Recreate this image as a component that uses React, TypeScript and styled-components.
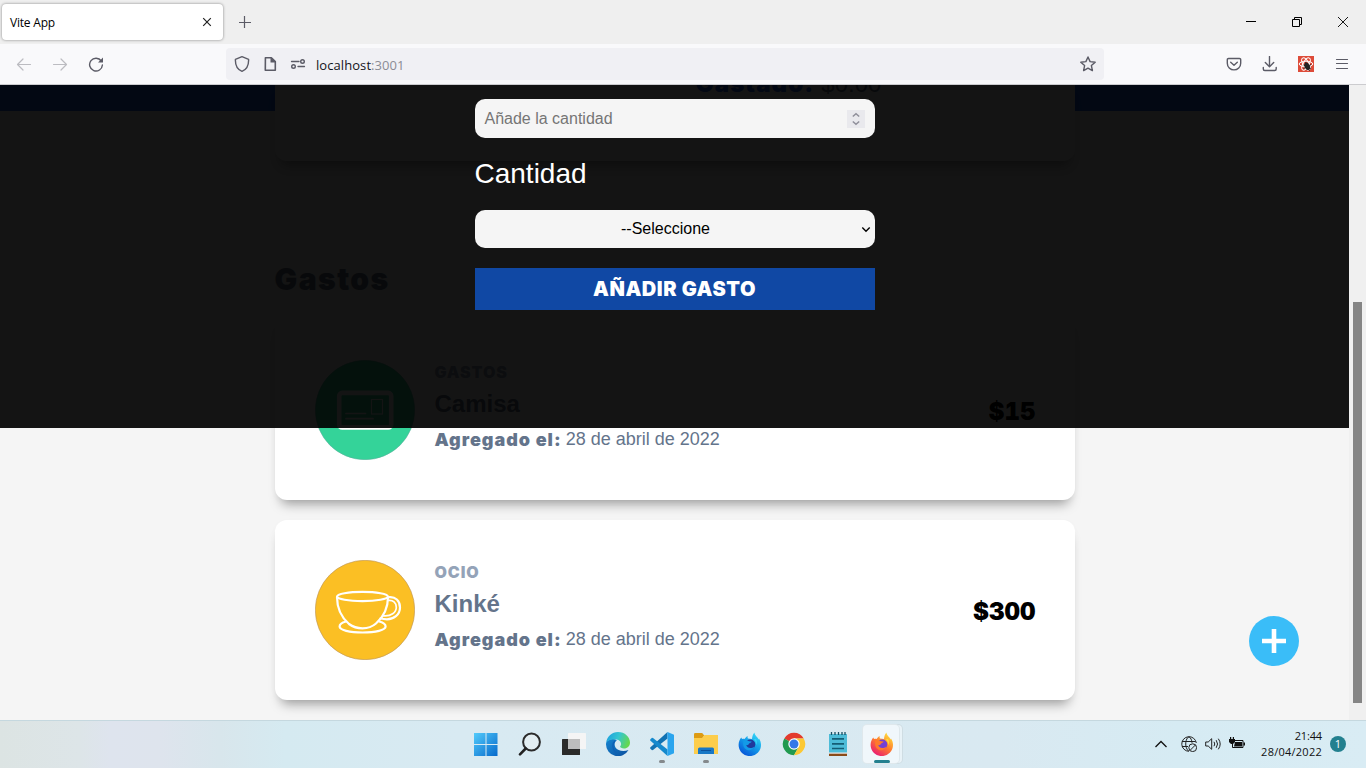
import React from "react";
import styled, { createGlobalStyle, css } from "styled-components";

const GlobalStyle = createGlobalStyle`
  *, *::before, *::after { box-sizing: border-box; }
  body { margin: 0; overflow: hidden; font-family: "Liberation Sans", Arial, sans-serif; }
  button, input, select { font: inherit; border: 0; margin: 0; padding: 0; }
  svg { display: block; flex: none; }
`;

const UI_FONT = `"Open Sans", "Noto Sans", sans-serif`;

/* Heavy, slightly widened face for labels, headings and amounts */
const heavy = css`
  font-family: Inter, "Liberation Sans", Arial, sans-serif;
  font-weight: 900;
`;

const Desktop = styled.div`
  width: 1366px;
  height: 768px;
  display: flex;
  flex-direction: column;
  overflow: hidden;
`;

/* ---------- browser window ---------- */

const TabStrip = styled.div`
  height: 44px;
  background: #efefef;
  display: flex;
  align-items: center;
  padding-left: 2px;
`;

const Tab = styled.div`
  width: 221px;
  height: 36px;
  background: #fff;
  border-radius: 4px;
  box-shadow: 0 0 3px rgba(0, 0, 0, 0.45);
  display: flex;
  align-items: center;
  justify-content: space-between;
  padding: 0 11px 0 8px;
  font-family: ${UI_FONT};
  font-size: 12px;
  letter-spacing: -0.2px;
  color: #000;
`;

const NewTab = styled.div`
  margin-left: 16px;
`;

const WindowButtons = styled.div`
  margin-left: auto;
  display: flex;
  align-items: center;
  gap: 36px;
  padding-right: 18px;
`;

const Toolbar = styled.div`
  height: 41px;
  background: #f9f9fb;
  border-bottom: 1px solid #cccccf;
  display: flex;
  align-items: center;
`;

const NavButtons = styled.div`
  width: 226px;
  display: flex;
  align-items: center;
  gap: 20px;
  padding-left: 16px;
`;

const AddressBar = styled.div`
  width: 878px;
  height: 32px;
  background: #f0f0f4;
  border-radius: 4px;
  display: flex;
  align-items: center;
  padding: 0 8px;
`;

const AddressIcons = styled.div`
  display: flex;
  gap: 12px;
`;

const Url = styled.span`
  flex: 1;
  margin-left: 10px;
  padding-top: 1px;
  font-family: ${UI_FONT};
  font-size: 13px;
  letter-spacing: 0.07px;
  color: #15141a;
`;

const Port = styled.span`
  color: #8c8c94;
`;

const ToolButtons = styled.div`
  margin-left: auto;
  display: flex;
  align-items: center;
  gap: 20px;
  padding-right: 16px;
`;

/* ---------- page ---------- */

const Viewport = styled.div`
  height: 635px;
  display: flex;
  background: #efefef;
`;

const Page = styled.main`
  position: relative;
  width: 1349px;
  background: #f5f5f5;
  overflow: hidden;
`;

const Scrollbar = styled.div`
  width: 17px;
  background: #f0f0f0;
  padding: 217px 4px 0;
`;

const Thumb = styled.div`
  height: 401px;
  background: #858585;
`;

const HeaderBand = styled.div`
  height: 26px;
  background: #2563eb;
`;

const Column = styled.div`
  width: 800px;
  margin: -26px auto 0;
`;

const cardShadow = css`
  box-shadow: 0 10px 12px -6px rgba(0, 0, 0, 0.36), 0 2px 8px 0 rgba(0, 0, 0, 0.02);
`;

const BudgetCard = styled.section`
  height: 76px;
  background: #fff;
  border-radius: 0 0 12px 12px;
  ${cardShadow}
`;

const Spent = styled.p`
  margin: 0;
  margin-left: 421px;
  height: 10px;
  display: flex;
  align-items: flex-end;
  gap: 7px;
  font-size: 24px;
  line-height: 22px;
  color: #64748b;
`;

const SpentLabel = styled.b`
  ${heavy}
  letter-spacing: 1.1px;
  color: #2563eb;
`;

const Heading = styled.h2`
  margin: 93px 0 0;
  height: 51px;
  line-height: 50px;
  ${heavy}
  font-size: 30px;
  letter-spacing: 1.5px;
  color: #64748b;
`;

const ExpenseList = styled.div`
  display: flex;
  flex-direction: column;
  gap: 20px;
  padding-top: 15px;
`;

const ExpenseCard = styled.article`
  height: 180px;
  padding: 40px;
  background: #fff;
  border-radius: 12px;
  ${cardShadow}
  display: flex;
  align-items: center;
  gap: 20px;
`;

const ExpenseText = styled.div`
  flex: 1;
  margin-top: -2px;
  color: #64748b;
`;

const Category = styled.p`
  margin: 0;
  height: 26px;
  line-height: 22px;
  ${heavy}
  font-size: 16px;
  letter-spacing: 0.9px;
  text-transform: uppercase;
  color: #94a3b8;
`;

const Name = styled.p`
  margin: 0;
  height: 34px;
  line-height: 34px;
  font-size: 24px;
  font-weight: 700;
`;

const AddedOn = styled.p`
  margin: 0;
  display: flex;
  align-items: center;
  gap: 4px;
  height: 37px;
  font-size: 18px;
`;

const AddedLabel = styled.b`
  ${heavy}
  letter-spacing: 1px;
`;

const Amount = styled.p`
  margin: 3px -1px 0 0;
  ${heavy}
  font-size: 24px;
  font-variant-numeric: tabular-nums;
  color: #000;
`;

const Overlay = styled.div`
  position: absolute;
  inset: 0 0 auto 0;
  height: 343px;
  background: rgba(0, 0, 0, 0.92);
`;

const Form = styled.form`
  width: 400px;
  margin: 14px auto 0;
  display: flex;
  flex-direction: column;
`;

const AmountField = styled.div`
  height: 39px;
  border-radius: 10px;
  background: #f5f5f5;
  display: flex;
  align-items: center;
  justify-content: space-between;
  padding: 0 10px;
  font-size: 16px;
  color: #757575;
`;

const Spinner = styled.div`
  width: 18px;
  height: 18px;
  background: #e9e9ed;
`;

const FieldLabel = styled.label`
  height: 72px;
  line-height: 71px;
  font-size: 28px;
  color: #fff;
`;

const CategorySelect = styled.div`
  height: 38px;
  border-radius: 10px;
  background: #f5f5f5;
  display: flex;
  align-items: center;
  padding: 0 4px 0 0;
  font-size: 16px;
  color: #000;
`;

const SelectValue = styled.span`
  flex: 1;
  padding: 0 0 1px 0;
  margin-right: 4px;
  text-align: center;
`;

const Submit = styled.button`
  height: 42px;
  margin-top: 20px;
  background: #1048a4;
  color: #fff;
  ${heavy}
  font-size: 20px;
  letter-spacing: 0.55px;
  text-transform: uppercase;
`;

const AddButton = styled.div`
  position: absolute;
  right: 50px;
  bottom: 54px;
`;

/* ---------- taskbar ---------- */

const Taskbar = styled.footer`
  height: 48px;
  border-top: 1px solid #c5d8df;
  background: linear-gradient(90deg, #dce4e3 0, #dde5e8 80px, #dee4ee 110px, #dee4ed 160px, #d8e6ec 220px, #d5eaf1 285px, #d8eaf2 460px, #d9e9f1 1000px, #d6ebf3 1180px, #d9ecf4 1366px);
  display: grid;
  grid-template-columns: 1fr auto 1fr;
`;

const Apps = styled.div`
  grid-column: 2;
  display: flex;
`;

const AppSlot = styled.div<{ $mark?: "idle" | "active" }>`
  width: 44px;
  height: 47px;
  display: flex;
  flex-direction: column;
  align-items: center;
  padding: 11px 0 0 1px;
  gap: 4px;
  &::after {
    content: "";
    display: ${(p) => (p.$mark ? "block" : "none")};
    width: ${(p) => (p.$mark === "active" ? 16 : 6)}px;
    height: 3px;
    border-radius: 2px;
    background: ${(p) => (p.$mark === "active" ? "#23808f" : "#84898c")};
  }
`;

const ActiveTile = styled(AppSlot)`
  width: 36px;
  height: 38px;
  margin: 4px 4px 0 4px;
  padding: 7px 0 0 1px;
  border-radius: 4px;
  background: #f0f7fb;
  box-shadow: 0 0 0 1px #dfe8ec, 3px 0 0 0 #e9f3f8, 3px 0 0 1px #cfdde3;
`;

const Tray = styled.div`
  justify-self: end;
  display: flex;
  align-items: center;
  padding: 0 20px 1px 0;
`;

const TrayIcons = styled.div`
  display: flex;
  align-items: center;
  gap: 8px;
  margin-right: 13px;
`;

const Clock = styled.div`
  width: 63px;
  text-align: right;
  white-space: nowrap;
  font-family: ${UI_FONT};
  font-size: 11px;
  line-height: 16px;
  letter-spacing: 0.25px;
  color: #111;
`;

const ClockTime = styled.div`
  letter-spacing: -0.15px;
`;

const Count = styled.div`
  width: 16px;
  height: 16px;
  margin-left: 8px;
  border-radius: 50%;
  background: #23808f;
  color: #fff;
  font: 11px/16px ${UI_FONT};
  text-align: center;
`;

const line = { fill: "none", stroke: "#5b5b66", strokeWidth: 1.4, strokeLinecap: "round", strokeLinejoin: "round" } as const;

const SavingsIcon = () => (
  <svg width="100" height="100" viewBox="0 0 100 100">
    <circle cx="50" cy="50" r="49.7" fill="#34d399" stroke="#5da89b" strokeWidth=".5" />
    <g fill="none" stroke="#fff">
      <rect x="24.2" y="32.9" width="52" height="34.500" rx="3" strokeWidth="4.6" />
      <rect x="56.5" y="39.5" width="11" height="14.5" strokeWidth="1.1" />
      <path d="M31 53.5h19.500M31 58.700h27" strokeWidth="1.700" strokeLinecap="round" />
    </g>
  </svg>
);

const LeisureIcon = () => (
  <svg width="100" height="100" viewBox="0 0 100 100">
    <circle cx="50" cy="50" r="49.7" fill="#fbbf24" stroke="#b99362" strokeWidth=".6" />
    <g fill="none" stroke="#fff" strokeWidth="2.200" strokeLinecap="round">
      <ellipse cx="47.500" cy="36.500" rx="25.400" ry="4.600" />
      <path d="M22 37c0 12 4 20 12 27 4 3 8 4.300 13.500 4.300S57 67 61 63.500c8-7 12-15 12-26.500" />
      <path d="M31 61.500c-4 1-6.400 2.800-6.400 5 0 3.500 10 6 23 6s23-2.500 23-6c0-2.200-2.400-4-6.400-5" />
      <path d="M73.500 37.200c7-1 11.500 3.800 11.500 10.300 0 7.500-6.500 11.800-13 11.800-2.500 0-4.500-.3-6.500-1" />
      <path d="M73 40.500c5-.8 8.300 2.300 8.300 6.700 0 5.300-5.300 9.300-12.800 8.600" strokeWidth="1.700" />
    </g>
  </svg>
);

const Flame = ({ id, body, edge, core, hot }: { id: string; body: string; edge: string; core: string; hot: string }) => (
  <svg width="24" height="24" viewBox="0 0 24 24">
    <defs>
      <linearGradient id={id} x1="0.9" y1="0.1" x2="0.3" y2="1">
        <stop offset="0" stopColor={hot} />
        <stop offset=".5" stopColor={body} />
        <stop offset="1" stopColor={edge} />
      </linearGradient>
    </defs>
    <path d="M3.300 5.500c.3.800.5 1.200 1 1.600.8-.3 1.700-.3 2.400-.1C7.500 5.500 8.500 4.500 9.700 4c-.3 1-.1 2 .3 2.600L14 7c.2-2.500.8-4.800 2.400-6.500.2 2.300 1.800 3.500 3 5 .6.600.9 1.200 1.200 1.900l.4-1c1.300 2 2 4.200 2 6.400A11.200 11.200 0 1 1 .6 13c0-3 1-5.500 2.700-7.500z" fill={`url(#${id})`} />
    <circle cx="12.300" cy="12.500" r="5" fill={core} />
    <path d="M5.500 9c2-.8 4.200-.7 5.600.2l2.600.3c-.3 1.300-2.200 1.500-2.800 2.300-.4 1.500-2 1.500-2.700 1.200 1 3.300 4.800 4 8.500 1.500-1.500 3.500-5 4.500-8 3.200C5.500 16.300 4.500 12.500 5.500 9z" fill={body} />
    <path d="M15.500 7.500c2 1.200 2.900 3.300 2.700 5.800 1-2 1-4.500-.2-6.300z" fill={hot} />
  </svg>
);

export default function App() {
  return (
    <Desktop>
      <GlobalStyle />
      <TabStrip>
        <Tab>
          <span>Vite App</span>
          <svg width="10" height="10" viewBox="0 0 10 10"><path d="M1.200 1.200l7.600 7.600M8.800 1.200L1.200 8.800" stroke="#222" strokeWidth="1.200" /></svg>
        </Tab>
        <NewTab>
          <svg width="12" height="12" viewBox="0 0 12 12"><path d="M5.500 0v12M0 6.500h12" stroke="#5b5b66" strokeWidth="1.200" /></svg>
        </NewTab>
        <WindowButtons>
          <svg width="10" height="10" viewBox="0 0 10 10"><path d="M0 4.500h10" stroke="#000" /></svg>
          <svg width="10" height="10" viewBox="0 0 10 10"><path d="M.5 2.500h7v7h-7zM2.500 2.500v-2h7v7h-2" fill="none" stroke="#000" /></svg>
          <svg width="10" height="10" viewBox="0 0 10 10"><path d="M0 0l10 10M10 0L0 10" stroke="#000" strokeWidth=".9" /></svg>
        </WindowButtons>
      </TabStrip>
      <Toolbar>
        <NavButtons>
          <svg width="16" height="16" viewBox="0 0 16 16"><path d="M14.500 8.500H1.500M7 3L1.500 8.500 7 14" {...line} strokeWidth="1.200" stroke="#bcbcc1" /></svg>
          <svg width="16" height="16" viewBox="0 0 16 16"><path d="M1.500 8.500h13M9 3l5.500 5.500L9 14" {...line} strokeWidth="1.200" stroke="#bcbcc1" /></svg>
          <svg width="16" height="16" viewBox="0 0 16 16"><path d="M13.300 5A6.400 6.400 0 1 0 14.400 9" {...line} /><path d="M15 1.500V6.500h-5z" fill="#5b5b66" /></svg>
        </NavButtons>
        <AddressBar>
          <AddressIcons>
            <svg width="16" height="16" viewBox="0 0 16 16"><path d="M8 .7L14.600 3.400C14.800 9 12.700 13.500 8 15.300 3.300 13.500 1.200 9 1.400 3.400z" {...line} /></svg>
            <svg width="16" height="16" viewBox="0 0 16 16"><path d="M3.400 1.700h6L13.300 5.600v8.700h-10z" {...line} strokeWidth="1.600" /><path d="M8.500 1v5.500H14z" fill="#5b5b66" /></svg>
            <svg width="16" height="16" viewBox="0 0 16 16"><path d="M1.500 5.500h7.500M8 10.500h6.500" {...line} strokeWidth="1.300" /><circle cx="12.500" cy="5.500" r="1.800" {...line} /><circle cx="3.500" cy="10.500" r="1.800" {...line} /></svg>
          </AddressIcons>
          <Url>localhost<Port>:3001</Port></Url>
          <svg width="16" height="16" viewBox="0 0 16 16"><path d="M8 1l2.100 4.600 5.100.6-3.800 3.400 1 5L8 12.100l-4.400 2.500 1-5L.8 6.200l5.100-.6z" {...line} /></svg>
        </AddressBar>
        <ToolButtons>
          <svg width="16" height="16" viewBox="0 0 16 16"><path d="M2.500 2.500h11a1.200 1.200 0 0 1 1.200 1.200v3.500a6.700 6.700 0 0 1-13.400 0V3.700a1.200 1.200 0 0 1 1.200-1.200zM4.700 6.300L8 9.300l3.300-3" {...line} /></svg>
          <svg width="16" height="16" viewBox="0 0 16 16"><path d="M7.500 .5v10M3.300 6.500L7.500 10.700l4.200-4.200M1.300 11.500v1.500q0 1.500 1.500 1.500h9.900q1.500 0 1.500-1.500v-1.500" {...line} /></svg>
          <svg width="16" height="16" viewBox="0 0 16 16">
            <rect width="16" height="16" fill="#dd4b39" />
            <g fill="none" stroke="#fff" strokeWidth="1">
              <ellipse cx="8" cy="8" rx="6.800" ry="2.800" />
              <ellipse cx="8" cy="8" rx="6.800" ry="2.800" transform="rotate(60 8 8)" />
              <ellipse cx="8" cy="8" rx="6.800" ry="2.800" transform="rotate(120 8 8)" />
            </g>
            <ellipse cx="9.200" cy="10.300" rx="2.600" ry="3.800" fill="#222" transform="rotate(-25 9.200 10.300)" />
            <path d="M5.500 9l7.500 4M5.500 12.500L13 8.500M7.500 6l4 9" stroke="#222" strokeWidth=".9" />
          </svg>
          <svg width="16" height="16" viewBox="0 0 16 16"><path d="M2.500 3.500h11M2.500 7.500h11M2.500 12.500h11" {...line} strokeWidth="1.200" /></svg>
        </ToolButtons>
      </Toolbar>

      <Viewport>
        <Page>
          <HeaderBand />
          <Column>
            <BudgetCard>
              <Spent><SpentLabel>Gastado:</SpentLabel><span>$0.00</span></Spent>
            </BudgetCard>
            <Heading>Gastos</Heading>
            <ExpenseList>
              <ExpenseCard>
                <SavingsIcon />
                <ExpenseText>
                  <Category>Gastos</Category>
                  <Name>Camisa</Name>
                  <AddedOn><AddedLabel>Agregado el:</AddedLabel><span>28 de abril de 2022</span></AddedOn>
                </ExpenseText>
                <Amount>$15</Amount>
              </ExpenseCard>
              <ExpenseCard>
                <LeisureIcon />
                <ExpenseText>
                  <Category>Ocio</Category>
                  <Name>Kinké</Name>
                  <AddedOn><AddedLabel>Agregado el:</AddedLabel><span>28 de abril de 2022</span></AddedOn>
                </ExpenseText>
                <Amount>$300</Amount>
              </ExpenseCard>
            </ExpenseList>
          </Column>
          <Overlay>
            <Form>
              <AmountField>
                <span>Añade la cantidad</span>
                <Spinner>
                  <svg width="18" height="18" viewBox="0 0 18 18"><path d="M5.800 6.500L9 3.700l3.200 2.800M5.800 11.500L9 14.300l3.200-2.800" fill="none" stroke="#8f8f9a" strokeWidth="1.500" /></svg>
                </Spinner>
              </AmountField>
              <FieldLabel>Cantidad</FieldLabel>
              <CategorySelect>
                <SelectValue>--Seleccione</SelectValue>
                <svg width="10" height="10" viewBox="0 0 10 10"><path d="M1.300 3.500L5 7.200l3.700-3.700" fill="none" stroke="#000" strokeWidth="1.400" /></svg>
              </CategorySelect>
              <Submit type="button">Añadir gasto</Submit>
            </Form>
          </Overlay>
          <AddButton>
            <svg width="50" height="50" viewBox="0 0 50 50"><circle cx="25" cy="25" r="25" fill="#3abdf8" /><path d="M25 13v24M13 25h24" stroke="#fff" strokeWidth="4.600" /></svg>
          </AddButton>
        </Page>
        <Scrollbar><Thumb /></Scrollbar>
      </Viewport>

      <Taskbar>
        <Apps>
          <AppSlot>
            <svg width="24" height="24" viewBox="0 0 24 24">
              <defs><linearGradient id="win" x1="0" y1="0" x2="1" y2="1"><stop offset="0" stopColor="#52cbfb" /><stop offset="1" stopColor="#0669cb" /></linearGradient></defs>
              <path d="M0 1h11.500v11H0zM12.500 1h11v11h-11zM0 13h11.500v11H0zM12.500 13h11v11h-11z" fill="url(#win)" />
            </svg>
          </AppSlot>
          <AppSlot>
            <svg width="24" height="24" viewBox="0 0 24 24"><circle cx="13.500" cy="10" r="8.400" fill="#e3eef2" stroke="#2b2b2b" strokeWidth="2" /><path d="M7.700 16.500l-5.700 5.800" stroke="#222" strokeWidth="2.600" strokeLinecap="round" /></svg>
          </AppSlot>
          <AppSlot>
            <svg width="24" height="24" viewBox="0 0 24 24"><rect x="0" y="7" width="18" height="16" rx=".6" fill="#2b2b2a" /><rect x="6" y="1" width="18" height="16" rx=".6" fill="#f5f5f5" /><path d="M6 7h12v10H6z" fill="#bdbdbd" /></svg>
          </AppSlot>
          <AppSlot>
            <svg width="24" height="24" viewBox="0 0 24 24">
              <defs>
                <linearGradient id="edgeTop" x1="0" y1=".2" x2="1" y2=".5"><stop offset="0" stopColor="#1c9fe0" /><stop offset=".5" stopColor="#34c6d0" /><stop offset="1" stopColor="#66d84c" /></linearGradient>
                <linearGradient id="edgeLow" x1="0" y1="0" x2="1" y2="1"><stop offset="0" stopColor="#1684d0" /><stop offset="1" stopColor="#0b4f9e" /></linearGradient>
              </defs>
              <path d="M.2 10.500C2 7 7 6 11 8c-2.500 2-3 5-1.500 7.500 2 3.300 8 4.500 13 2.500A12 12 0 0 1 0 12z" fill="url(#edgeLow)" />
              <path d="M.2 10.500C1 4.500 6 0 12 0c6.800 0 12 5 12 10.500 0 3.500-2.500 6-6 6-2.200 0-3.900-.8-3.900-1.900 0-.7 1-1 1-2.700 0-2.500-2.500-4.700-6.200-4.700C5.500 7.200 1.700 8.300.2 10.500z" fill="url(#edgeTop)" />
              <path d="M9 8.800c-3 2.500-3 8.500 1 12" fill="none" stroke="#0f5fb4" strokeWidth="1.200" />
            </svg>
          </AppSlot>
          <AppSlot $mark="idle">
            <svg width="24" height="24" viewBox="0 0 24 24"><path d="M17.500 0v6.500L3 18l-1 .2-1.800-1.700v-1z" fill="#1172b3" /><path d="M17.500 24v-6.500L3 6l-1-.2L.2 7.500v1z" fill="#1589cd" /><path d="M17.500 0L24 2.800v18.400L17.500 24z" fill="#2aa5ee" /></svg>
          </AppSlot>
          <AppSlot $mark="idle">
            <svg width="24" height="24" viewBox="0 0 24 24">
              <path d="M0 2.200Q0 1 1.200 1h7l2 2.500L8 7H0z" fill="#dd9b13" /><path d="M0 6h8l2.500-3H24v19H0z" fill="#fccd4c" /><path d="M4 22v-5q0-1.500 1.500-1.500h13Q20 15.500 20 17v5z" fill="#1878c6" /><path d="M7 18.500h10" stroke="#0c529c" />
            </svg>
          </AppSlot>
          <AppSlot><Flame id="dev" body="#139be8" edge="#0755d8" core="#203a9c" hot="#35d8f8" /></AppSlot>
          <AppSlot>
            <svg width="24" height="24" viewBox="0 0 24 24">
              <path d="M12 12L2.300 6.400A11.200 11.200 0 0 1 21.700 6.400H12z" fill="#e33b2e" />
              <path d="M12 12l4.800 2.800L12 23.200A11.200 11.200 0 0 1 2.300 6.400z" fill="#219a50" />
              <path d="M12 6.400h9.700A11.200 11.200 0 0 1 12 23.200l4.800-8.400z" fill="#fcc934" />
              <circle cx="12" cy="12" r="5.700" fill="#fff" /><circle cx="12" cy="12" r="4.500" fill="#3478e8" />
            </svg>
          </AppSlot>
          <AppSlot>
            <svg width="24" height="24" viewBox="0 0 24 24"><path d="M3 2h18v19H3z" fill="#4dbcd8" /><path d="M3 21h18v3H3z" fill="#8a4b19" /><path d="M3 20.500h18v1.200H3z" fill="#eee" /><path d="M6 6.800h12M6 11.800h12M6 16.500h12" stroke="#145d75" strokeWidth="1.700" /><path d="M5.500 0v3M9 0v3M12.500 0v3M16 0v3M19 0v3" stroke="#174f63" strokeWidth="1.300" /></svg>
          </AppSlot>
          <ActiveTile $mark="active"><Flame id="fox" body="#ff7a2d" edge="#e91c73" core="#7440d6" hot="#ffe13c" /></ActiveTile>
        </Apps>
        <Tray>
          <TrayIcons>
            <svg width="16" height="16" viewBox="0 0 16 16"><path d="M2.500 11L8 5.500l5.500 5.500" fill="none" stroke="#111" strokeWidth="1.300" /></svg>
            <svg width="20" height="16" viewBox="-4 0 20 16">
              <g fill="none" stroke="#222" strokeWidth="1"><path d="M8 15.300A7.300 7.300 0 1 1 15.300 7M1 5.500h13.500M1 10.500h6M7.500 15C3 11 4.500 2 8 .800c1.800 1 2.800 3.200 3 6" /><circle cx="11.700" cy="11.700" r="3.900" /><path d="M9 14.400l5.400-5.400" /></g>
            </svg>
            <svg width="16" height="16" viewBox="0 0 16 16"><path d="M.7 6h2.500l3.500-3.300v10.600L3.200 10H.7zM9 5.800q1.500 2.200 0 4.400M11.200 4.200q2.700 3.800 0 7.600M13.300 2.700q3.800 5.300 0 10.600" fill="none" stroke="#222" /></svg>
            <svg width="17" height="16" viewBox="0 0 17 16"><path d="M5 4.500h9v7H3.500V8" fill="none" stroke="#111" /><path d="M6 6h7v4.500H5zM14.500 6.500H16v3h-1.500zM0 3h6v3L4 8H2L0 6zM1 1h1.200v2H1zM3.800 1H5v2H3.800z" fill="#111" /></svg>
          </TrayIcons>
          <Clock><ClockTime>21:44</ClockTime>28/04/2022</Clock>
          <Count>1</Count>
        </Tray>
      </Taskbar>
    </Desktop>
  );
}
